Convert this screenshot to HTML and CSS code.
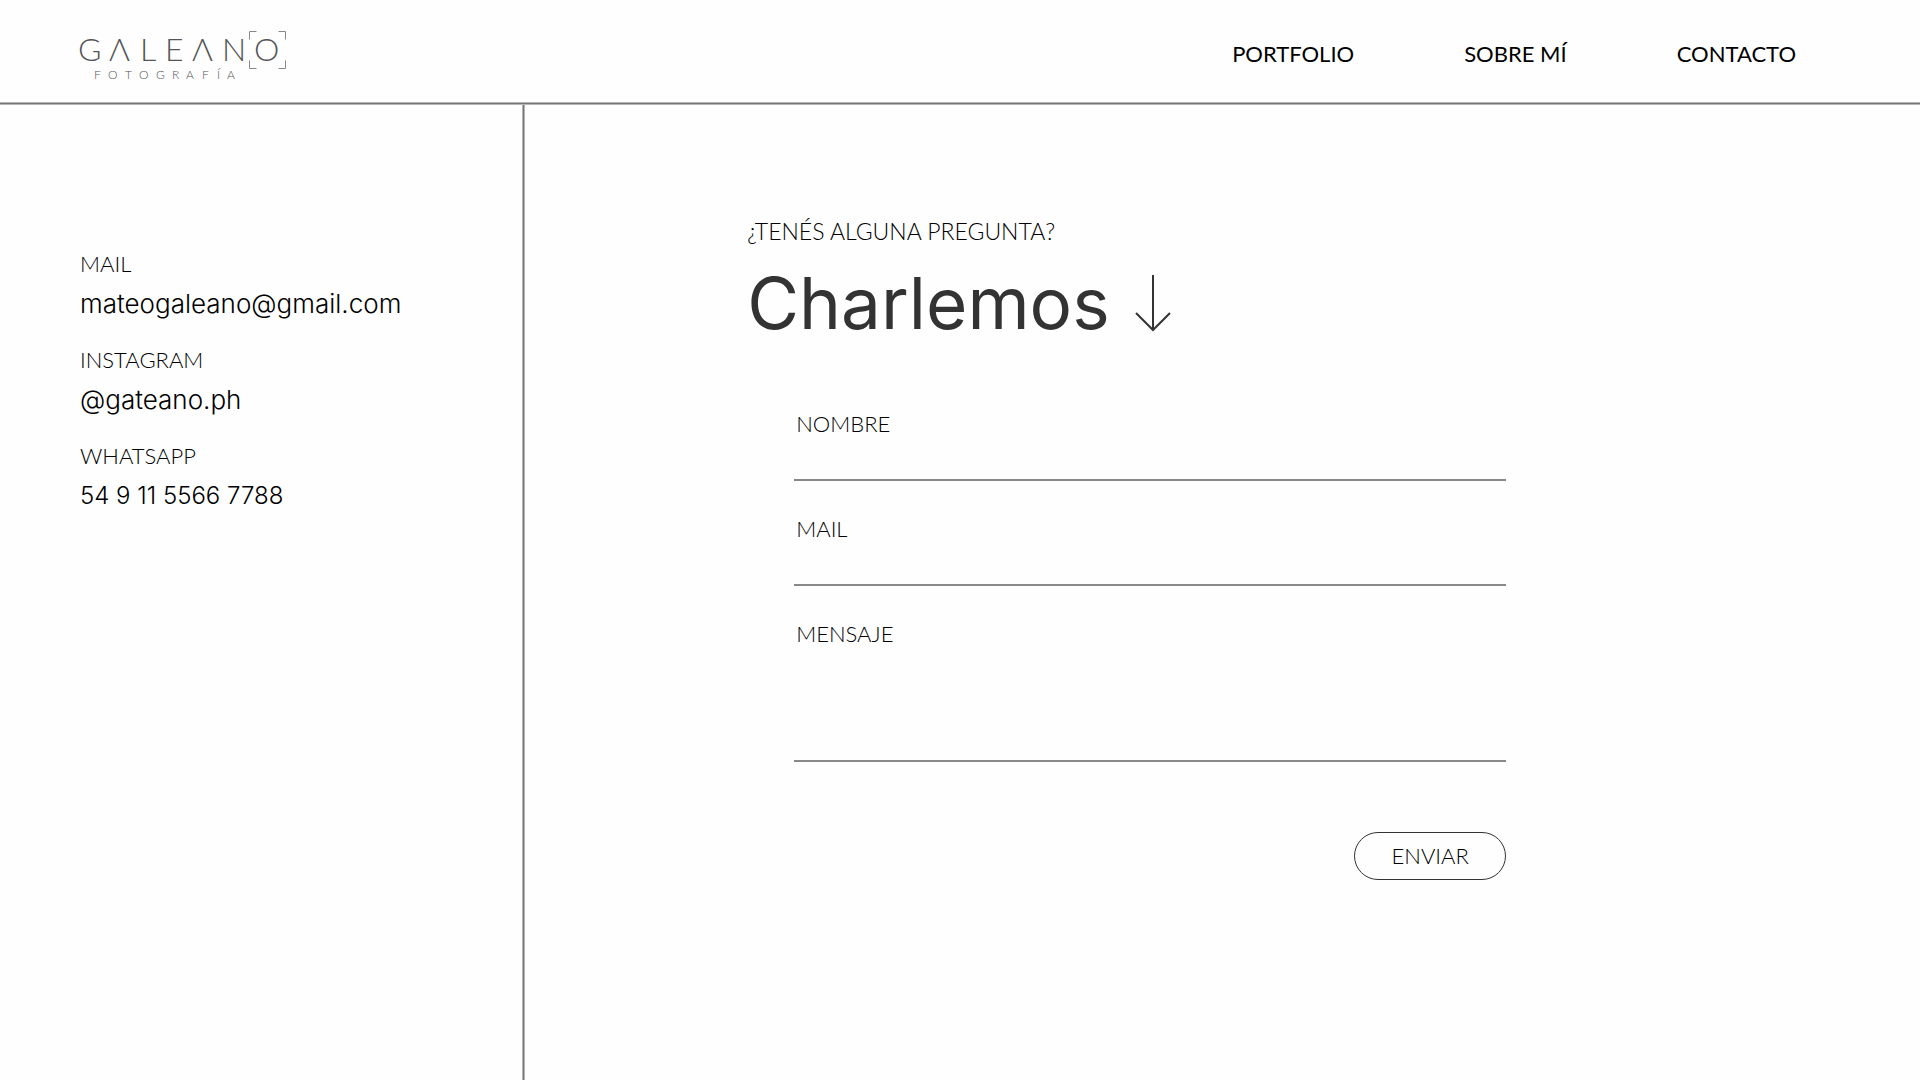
FILE: index.html
```html
<!DOCTYPE html>
<html lang="es">
<head>
  <meta charset="utf-8">
  <meta name="viewport" content="width=device-width, initial-scale=1">
  <title>Galeano Fotografía</title>
  <link rel="stylesheet" href="styles.css">
</head>
<body>
  <header class="header">
    <a class="logo" href="#">
      <svg class="logo-mark" viewBox="-4 0 214 60" width="214" height="60">
        <text class="logo-name" y="37" x="-2 29 60 85 112 142 174">GΛLEΛNO</text>
        <text class="logo-sub" y="55" x="14 28 45 59 76 92 106 122 137 147">FOTOGRAFÍA</text>
        <path class="logo-frame" d="M176.500 7.500h-7v8M198.500 7.500h7v8M176.500 44.500h-7v-8M198.500 44.500h7v-8"/>
      </svg>
    </a>
    <nav class="nav">
      <a href="#">PORTFOLIO</a>
      <a href="#">SOBRE MÍ</a>
      <a href="#">CONTACTO</a>
    </nav>
  </header>
  <div class="rule rule-h"></div>
  <main class="page">
    <aside class="contact">
      <dl class="contact-list">
        <div><dt>MAIL</dt><dd><a href="mailto:mateogaleano@gmail.com">mateogaleano@gmail.com</a></dd></div>
        <div><dt>INSTAGRAM</dt><dd><a href="#">@gateano.ph</a></dd></div>
        <div><dt>WHATSAPP</dt><dd class="phone"><a href="#">54 9 11 5566 7788</a></dd></div>
      </dl>
    </aside>
    <div class="rule rule-v"></div>
    <section class="talk">
      <p class="eyebrow">¿TENÉS ALGUNA PREGUNTA?</p>
      <h1 class="title">Charlemos
        <svg class="arrow" viewBox="0 0 36 58" width="36" height="58"><path d="M18 1V56M1 39L18 56L35 39"/></svg>
      </h1>
      <form class="form">
        <div class="field">
          <label for="nombre">NOMBRE</label>
          <input id="nombre" type="text">
        </div>
        <div class="field">
          <label for="mail">MAIL</label>
          <input id="mail" type="email">
        </div>
        <div class="field">
          <label for="mensaje">MENSAJE</label>
          <textarea id="mensaje"></textarea>
        </div>
        <button class="send" type="submit">ENVIAR</button>
      </form>
    </section>
  </main>
</body>
</html>
```
FILE: styles.css
```css
* {
  box-sizing: border-box;
}

body {
  margin: 0;
  min-height: 100vh;
  display: flex;
  flex-direction: column;
  background: #fefefe;
  color: #000;
  font-family: Lato, "Open Sans", sans-serif;
  font-size: 22px;
  font-weight: 300;
  line-height: 32px;
}

a {
  color: inherit;
  text-decoration: none;
}

.header {
  display: flex;
  align-items: center;
  justify-content: space-between;
  height: 102px;
  padding: 6px 124px 0 76px;
}

.logo-mark {
  display: block;
  overflow: visible;
  fill: #555;
}

.logo-name {
  font-size: 32px;
  font-weight: 300;
}

.logo-sub {
  font-size: 12px;
  font-weight: 300;
}

.logo-frame {
  fill: none;
  stroke: #888;
}

.nav {
  display: flex;
  gap: 110px;
  font-weight: 400;
}

/* Soft-edged divider lines */
.rule {
  flex: none;
  background: #757575;
}

.rule-h {
  height: 3px;
  border: solid #b5b5b5;
  border-width: 1px 0;
}

.rule-v {
  width: 3px;
  border: solid #b5b5b5;
  border-width: 0 1px;
}

.page {
  flex: 1;
  display: flex;
}

.contact {
  flex: none;
  width: 27.2%;
  padding: 139px 24px 48px 80px;
}

.contact-list {
  display: grid;
  gap: 16px;
  margin: 0;
  line-height: 40px;
}

.contact-list dd {
  margin: 0;
  font-family: Inter, sans-serif;
  font-size: 26px;
}

.contact-list .phone {
  font-size: 24px;
}

.talk {
  flex: 1;
  padding: 110px 48px 48px 222px;
}

.eyebrow {
  margin: 0;
  font-size: 23px;
}

.title {
  display: flex;
  align-items: center;
  gap: 25px;
  margin: 16px 0 65px;
  color: #333;
  font-family: Inter, sans-serif;
  font-size: 71px;
  font-weight: 400;
  line-height: 80px;
}

.arrow {
  fill: none;
  stroke: #333;
  stroke-width: 2;
}

.form {
  display: flex;
  flex-direction: column;
  gap: 32px;
  max-width: 759px;
  padding-left: 47px;
}

.field {
  display: flex;
  flex-direction: column;
}

.field label {
  padding-left: 2px;
}

.field input,
.field textarea {
  width: 100%;
  height: 41px;
  padding: 0 2px;
  border: 0;
  border-bottom: 2px solid #888;
  border-radius: 0;
  background: none;
  color: inherit;
  font: inherit;
  outline: none;
  resize: none;
}

.field textarea {
  height: 112px;
}

.send {
  align-self: flex-end;
  width: 152px;
  height: 48px;
  margin-top: 38px;
  padding: 0;
  border: 1px solid #333;
  border-radius: 24px;
  background: none;
  color: inherit;
  font: inherit;
}
```
